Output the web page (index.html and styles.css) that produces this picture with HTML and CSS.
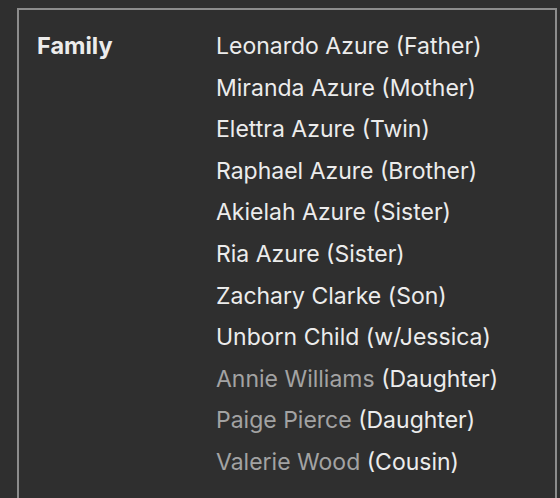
FILE: index.html
```html
<!DOCTYPE html>
<html>
<head>
<meta charset="utf-8">
<link rel="stylesheet" href="styles.css">
</head>
<body>
<div class="infobox">
  <div class="row">
    <div class="label">Family</div>
    <ul class="values">
      <li>Leonardo Azure (Father)</li>
      <li>Miranda Azure (Mother)</li>
      <li>Elettra Azure (Twin)</li>
      <li>Raphael Azure (Brother)</li>
      <li>Akielah Azure (Sister)</li>
      <li>Ria Azure (Sister)</li>
      <li>Zachary Clarke (Son)</li>
      <li>Unborn Child (w/Jessica)</li>
      <li><span class="muted">Annie Williams</span> (Daughter)</li>
      <li><span class="muted">Paige Pierce</span> (Daughter)</li>
      <li><span class="muted">Valerie Wood</span> (Cousin)</li>
    </ul>
  </div>
</div>
</body>
</html>
```
FILE: styles.css
```css
html, body {
  margin: 0;
  padding: 0;
  background: #2f2f2f;
}
body {
  font-family: Inter, "Noto Sans", sans-serif;
  color: #ececec;
}
.infobox {
  margin: 8px 3px 0 17px;
  border-top: 2px solid #8c8c8c;
  border-left: 2px solid #8c8c8c;
  border-right: 2px solid #8c8c8c;
  height: 600px;
}
.row {
  display: grid;
  grid-template-columns: 179px 1fr;
  padding: 21px 0 0 18px;
}
.label {
  font-weight: 700;
  font-size: 23.5px;
  line-height: 30px;
}
.values {
  list-style: none;
  margin: 0;
  padding: 0;
  font-size: 23px;
  line-height: 41.6px;
  margin-top: -5px;
}
.muted {
  color: #a3a3a3;
}
```
